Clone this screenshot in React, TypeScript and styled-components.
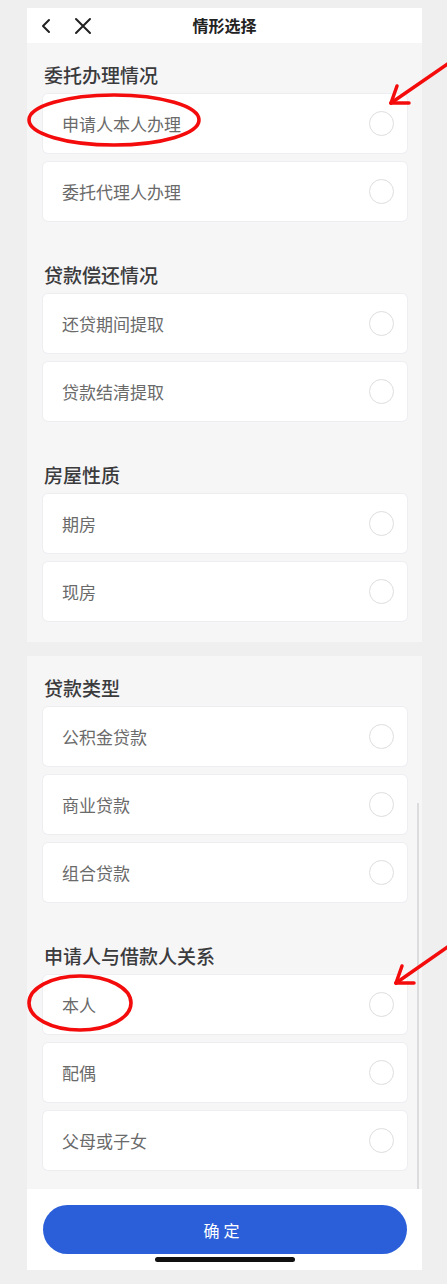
import styled, { createGlobalStyle } from "styled-components";

const GlobalStyle = createGlobalStyle`
  html, body {
    margin: 0;
    padding: 0;
    background: #efeff0;
  }
  body {
    font-family: "Noto Sans CJK SC", "Noto Sans", sans-serif;
    -webkit-font-smoothing: antialiased;
  }
`;

const SECTIONS_TOP = [
	{ title: "委托办理情况", options: ["申请人本人办理", "委托代理人办理"] },
	{ title: "贷款偿还情况", options: ["还贷期间提取", "贷款结清提取"] },
	{ title: "房屋性质", options: ["期房", "现房"] },
];

const SECTIONS_BOTTOM = [
	{ title: "贷款类型", options: ["公积金贷款", "商业贷款", "组合贷款"] },
	{ title: "申请人与借款人关系", options: ["本人", "配偶", "父母或子女"] },
];

const Screen = styled.div`
  position: relative;
  width: 447px;
  height: 1284px;
  overflow: hidden;
`;

const Shell = styled.div`
  width: 395px;
  margin: 8px 0 0 27px;
  display: flex;
  flex-direction: column;
`;

const Header = styled.header`
  height: 35px;
  background: #fff;
  display: flex;
  align-items: center;
  position: relative;
  padding-left: 13px;
  gap: 20px;
  box-sizing: border-box;
`;

const IconButton = styled.span`
  display: flex;
  align-items: center;
  justify-content: center;
  color: #222;
`;

const HeaderTitle = styled.h1`
  position: absolute;
  left: 0;
  right: 0;
  text-align: center;
  margin: 0;
  font-size: 16px;
  font-weight: 600;
  color: #222;
  line-height: 35px;
  pointer-events: none;
`;

const Panel = styled.div<{ $top: number; $bottom: number }>`
  position: relative;
  background: #f6f6f7;
  padding: ${({ $top, $bottom }) => `${$top}px 15px ${$bottom}px 16px`};
  display: flex;
  flex-direction: column;
  gap: 42px;
`;

const PanelGap = styled.div`
  height: 14px;
`;

const Section = styled.section`
  display: flex;
  flex-direction: column;
  gap: 9px;
`;

const SectionTitle = styled.h2`
  margin: 0 0 -2px 1px;
  font-size: 19px;
  line-height: 24px;
  font-weight: 500;
  color: #3b3b3d;
`;

const OptionCard = styled.div`
  height: 59px;
  box-sizing: border-box;
  background: #fff;
  border-radius: 5px;
  box-shadow: 0 0 0 1px #eeeef2;
  display: flex;
  align-items: center;
  justify-content: space-between;
  padding: 0 13px 0 19px;
`;

const OptionLabel = styled.span`
  font-size: 17px;
  color: #6a6a6a;
  line-height: 24px;
`;

const Radio = styled.span`
  width: 25px;
  height: 25px;
  box-sizing: border-box;
  border: 1px solid #dedee0;
  border-radius: 50%;
`;

const ScrollThumb = styled.div`
  position: absolute;
  right: 3px;
  top: 147px;
  bottom: 0;
  width: 2px;
  background: #dcdcdf;
`;

const Footer = styled.footer`
  height: 81px;
  background: #fff;
  display: flex;
  flex-direction: column;
  align-items: center;
  padding-top: 16px;
  box-sizing: border-box;
`;

const ConfirmButton = styled.button`
  width: 364px;
  height: 49px;
  border: none;
  border-radius: 25px;
  background: #2b5fd9;
  color: #fff;
  font-family: inherit;
  font-size: 16px;
  letter-spacing: 4px;
  padding-left: 4px;
`;

const HomeBar = styled.div`
  width: 140px;
  height: 5px;
  margin-top: 3px;
  border-radius: 3px;
  background: #111;
`;

const Annotations = styled.svg`
  position: absolute;
  left: 0;
  top: 0;
  pointer-events: none;
`;

type SectionData = { title: string; options: string[] };

const OptionSection = ({ data }: { data: SectionData }) => (
	<Section>
		<SectionTitle>{data.title}</SectionTitle>
		{data.options.map((option) => (
			<OptionCard key={option}>
				<OptionLabel>{option}</OptionLabel>
				<Radio />
			</OptionCard>
		))}
	</Section>
);

const Arrow = ({ tip, tail, arms }: { tip: [number, number]; tail: [number, number]; arms: [number, number][] }) => (
	<g stroke="#f40c0c" strokeWidth="3.5" strokeLinecap="round" fill="none">
		<line x1={tail[0]} y1={tail[1]} x2={tip[0]} y2={tip[1]} />
		{arms.map(([x, y], i) => (
			<line key={i} x1={tip[0]} y1={tip[1]} x2={x} y2={y} />
		))}
	</g>
);

const App = () => {
	return (
		<Screen>
			<GlobalStyle />
			<Shell>
				<Header>
					<IconButton>
						<svg width="14" height="16" viewBox="0 0 14 16" fill="none" stroke="currentColor" strokeWidth="2" strokeLinecap="round" strokeLinejoin="round">
							<path d="M9 2L3 8l6 6" />
						</svg>
					</IconButton>
					<IconButton>
						<svg width="18" height="18" viewBox="0 0 18 18" fill="none" stroke="currentColor" strokeWidth="2" strokeLinecap="round">
							<path d="M2 2l14 14M16 2L2 16" />
						</svg>
					</IconButton>
					<HeaderTitle>情形选择</HeaderTitle>
				</Header>
				<Panel $top={20} $bottom={21}>
					{SECTIONS_TOP.map((s) => (
						<OptionSection key={s.title} data={s} />
					))}
				</Panel>
				<PanelGap />
				<Panel $top={20} $bottom={19}>
					{SECTIONS_BOTTOM.map((s) => (
						<OptionSection key={s.title} data={s} />
					))}
					<ScrollThumb />
				</Panel>
				<Footer>
					<ConfirmButton>确定</ConfirmButton>
					<HomeBar />
				</Footer>
			</Shell>
			<Annotations width="447" height="1284" viewBox="0 0 447 1284">
				<ellipse cx="114" cy="120" rx="85" ry="25" stroke="#f40c0c" strokeWidth="3.6" fill="none" />
				<ellipse cx="80" cy="1003" rx="51" ry="27" stroke="#f40c0c" strokeWidth="3.6" fill="none" />
				<Arrow tip={[391, 103]} tail={[449, 63]} arms={[[397, 86], [409, 103]]} />
				<Arrow tip={[396, 983]} tail={[449, 946]} arms={[[402, 966], [414, 983]]} />
			</Annotations>
		</Screen>
	);
};

export default App;
